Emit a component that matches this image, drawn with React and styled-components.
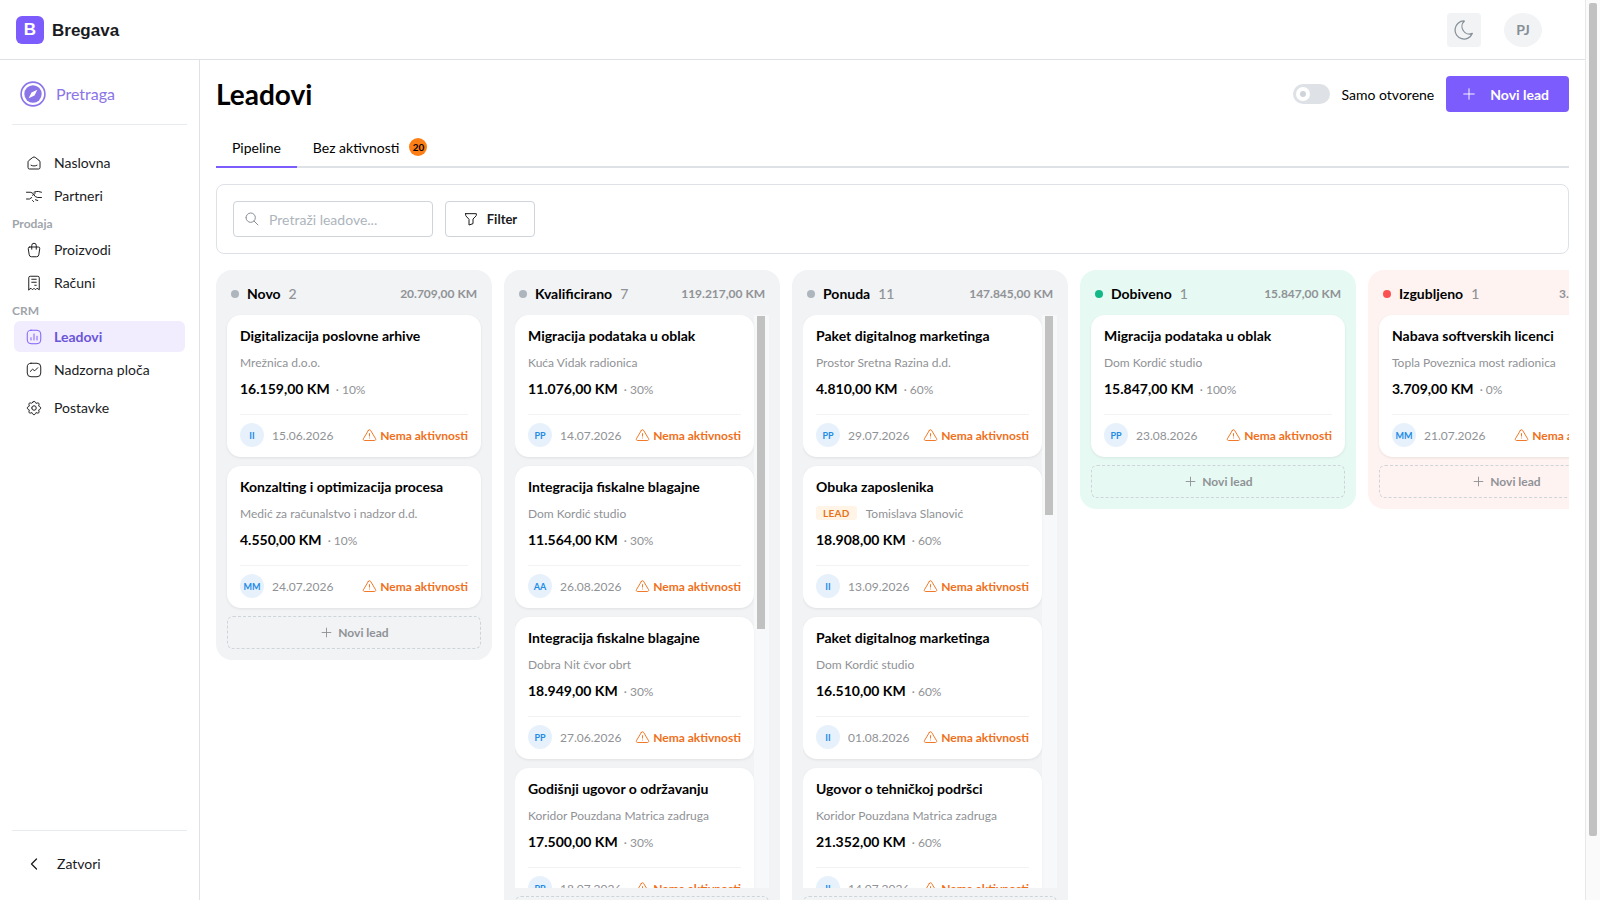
import styled, { createGlobalStyle } from 'styled-components'
import {
  TbSmartHome,
  TbShoppingBag,
  TbReceipt,
  TbSettings,
  TbChevronLeft,
  TbMoon,
  TbPlus,
  TbSearch,
  TbFilter,
  TbAlertTriangle,
} from 'react-icons/tb'

const GlobalStyle = createGlobalStyle`
  * { box-sizing: border-box; }
  html { overflow-y: scroll; scrollbar-width: none; }
  body {
    margin: 0;
    padding-right: 15px;
    background: #fff;
    color: #000;
    font-family: Lato, sans-serif;
    font-size: 14px;
  }
`

const PageTrack = styled.div`
  position: fixed;
  top: 0;
  right: 0;
  bottom: 0;
  z-index: 10;
  width: 15px;
  padding: 3px 3px 0 3px;
  background: #fafafa;
  border-left: 1px solid #e8e8e8;
`

const PageThumb = styled.div`
  height: 833px;
  background: #c1c1c1;
  border-radius: 2px;
`

const Header = styled.header`
  position: sticky;
  top: 0;
  z-index: 5;
  height: 60px;
  padding: 0 43px 0 16px;
  display: flex;
  align-items: center;
  justify-content: space-between;
  background: #fff;
  border-bottom: 1px solid #dee2e6;
`

const Brand = styled.div`
  display: flex;
  align-items: center;
  gap: 8px;
`

const BrandLogo = styled.div`
  width: 28px;
  height: 28px;
  border-radius: 6px;
  background: #7c5cfc;
  color: #fff;
  font: 700 17px 'Liberation Sans', sans-serif;
  display: flex;
  align-items: center;
  justify-content: center;
`

const BrandName = styled.span`
  margin-top: 2px;
  font: 700 17px 'Liberation Sans', sans-serif;
  color: #1a1b1e;
`

const HeaderActions = styled.div`
  display: flex;
  align-items: center;
  gap: 23px;
`

const ThemeButton = styled.div`
  width: 34px;
  height: 34px;
  border-radius: 4px;
  background: #f1f3f5;
  color: #868e96;
  display: flex;
  align-items: center;
  justify-content: center;
`

const UserBadge = styled.div`
  width: 38px;
  height: 34px;
  border-radius: 50%;
  background: #f1f3f5;
  color: #868e96;
  font-weight: 700;
  display: flex;
  align-items: center;
  justify-content: center;
`

const Shell = styled.div`
  display: flex;
  align-items: flex-start;
`

const Sidebar = styled.aside`
  position: sticky;
  top: 60px;
  flex: none;
  width: 200px;
  height: calc(100vh - 60px);
  display: flex;
  flex-direction: column;
  border-right: 1px solid #dee2e6;
`

const SearchRow = styled.div`
  height: 65px;
  margin: 0 12px;
  padding: 3px 0 0 8px;
  display: flex;
  align-items: center;
  gap: 10px;
  color: #8b74e8;
  font-size: 16px;
  border-bottom: 1px solid #e9ecef;
`

const Nav = styled.nav`
  flex: 1;
  padding: 22px 14px 0;
  display: flex;
  flex-direction: column;
  gap: 2px;
`

const NavItem = styled.div`
  height: 31px;
  padding-left: 11px;
  margin-top: ${(props) => (props.$spaced ? '5px' : '0')};
  display: flex;
  align-items: center;
  gap: 11px;
  border-radius: 6px;
  color: ${(props) => (props.$active ? '#6b55d8' : '#1a1b1e')};
  background: ${(props) => (props.$active ? '#f1ecfe' : 'transparent')};
  font-weight: ${(props) => (props.$active ? 700 : 400)};
`

const NavIcon = styled.span`
  width: 18px;
  display: flex;
  justify-content: center;
  color: ${(props) => (props.$active ? '#7c5cfc' : '#1a1b1e')};
`

const NavLabel = styled.div`
  height: 16px;
  margin: 3px 0 0 -2px;
  font-size: 12px;
  line-height: 16px;
  font-weight: 700;
  color: #a0a5ab;
`

const SidebarFooter = styled.div`
  height: 70px;
  margin: 0 12px;
  padding: 0 0 4px 12px;
  display: flex;
  align-items: center;
  gap: 13px;
  color: #1a1b1e;
  border-top: 1px solid #e9ecef;
`

const Main = styled.main`
  flex: 1;
  min-width: 0;
  padding: 16px 16px 31px;
`

const TitleRow = styled.div`
  height: 36px;
  display: flex;
  align-items: center;
  gap: 12px;
`

const Title = styled.h1`
  margin: 0 auto 0 0;
  font-size: 28px;
  font-weight: 700;
  line-height: 36px;
`

const Toggle = styled.div`
  width: 37px;
  height: 20px;
  padding: 3px;
  border-radius: 10px;
  background: #dee2e6;
`

const ToggleThumb = styled.div`
  width: 14px;
  height: 14px;
  border-radius: 50%;
  background: #fff;
  display: flex;
  align-items: center;
  justify-content: center;

  &::after {
    content: '';
    width: 6px;
    height: 6px;
    border-radius: 50%;
    background: #ced4da;
  }
`

const PrimaryButton = styled.button`
  height: 36px;
  padding: 0 20px 0 14px;
  display: flex;
  align-items: center;
  gap: 12px;
  border: 0;
  border-radius: 4px;
  background: #7c5cfc;
  color: #fff;
  font: 700 14px Lato, sans-serif;
`

const Tabs = styled.div`
  margin-top: 16px;
  display: flex;
  border-bottom: 2px solid #dee2e6;
`

const Tab = styled.div`
  height: 38px;
  padding: 0 16px;
  margin-bottom: -2px;
  box-sizing: content-box;
  display: flex;
  align-items: center;
  gap: 10px;
  border-bottom: 2px solid ${(props) => (props.$active ? '#7c5cfc' : 'transparent')};
`

const CountBadge = styled.span`
  width: 18px;
  height: 18px;
  border-radius: 50%;
  background: #fd7e14;
  color: #000;
  font-size: 10px;
  font-weight: 700;
  display: flex;
  align-items: center;
  justify-content: center;
`

const FilterCard = styled.div`
  margin-top: 16px;
  padding: 16px;
  display: flex;
  gap: 12px;
  border: 1px solid #dee2e6;
  border-radius: 8px;
`

const SearchInput = styled.div`
  width: 200px;
  height: 36px;
  padding-left: 10px;
  display: flex;
  align-items: center;
  gap: 9px;
  border: 1px solid #ced4da;
  border-radius: 4px;
  color: #adb5bd;
`

const SearchIcon = styled.span`
  display: flex;
  color: #868e96;
`

const FilterButton = styled.button`
  width: 90px;
  height: 36px;
  display: flex;
  align-items: center;
  justify-content: center;
  gap: 8px;
  border: 1px solid #ced4da;
  border-radius: 4px;
  background: #fff;
  color: #1a1b1e;
  font: 700 13px Lato, sans-serif;
`

const Board = styled.div`
  margin-top: 16px;
  display: flex;
  align-items: flex-start;
  gap: 12px;
  overflow-x: auto;
  scrollbar-width: none;
`

const COLUMN_BACKGROUNDS = { gray: '#f1f3f5', green: '#e6faf3', red: '#fff3f2' }
const COLUMN_DOTS = { gray: '#adb5bd', green: '#12b886', red: '#fa5252' }

const Column = styled.section`
  flex: none;
  width: 276px;
  padding: 0 11px 11px;
  border-radius: 16px;
  background: ${(props) => COLUMN_BACKGROUNDS[props.$tone]};
`

const ColumnHead = styled.div`
  height: 45px;
  padding: 2px 4px 0;
  display: flex;
  align-items: center;
`

const Dot = styled.span`
  width: 8px;
  height: 8px;
  margin-right: 8px;
  border-radius: 50%;
  background: ${(props) => COLUMN_DOTS[props.$tone]};
`

const ColumnName = styled.span`
  font-weight: 700;
`

const ColumnCount = styled.span`
  margin-left: 8px;
  color: #909296;
  font-weight: 500;
`

const ColumnTotal = styled.span`
  margin-left: auto;
  color: #909296;
  font-size: 12px;
  font-weight: 700;
  white-space: nowrap;
`

const CardListFrame = styled.div`
  position: relative;
`

const CardList = styled.div`
  display: flex;
  flex-direction: column;
  gap: 9px;
  max-height: calc(100vh - 327px);
  padding-right: ${(props) => (props.$scroll ? '15px' : '0')};
  overflow-y: ${(props) => (props.$scroll ? 'auto' : 'visible')};
  scrollbar-width: none;
`

const ListTrack = styled.div`
  position: absolute;
  top: 0;
  right: 0;
  bottom: 0;
  width: 15px;
  padding: 1px 4px 0 3px;
  background: rgba(255, 255, 255, 0.45);
`

const ListThumb = styled.div`
  background: #c1c1c1;
`

const Card = styled.article`
  flex: none;
  height: 142px;
  padding: 11px 13px 0;
  border-radius: 14px;
  background: #fff;
  box-shadow: 0 1px 3px rgba(0, 0, 0, 0.08);
`

const CardTitle = styled.div`
  font-size: 14px;
  line-height: 20px;
  font-weight: 700;
  white-space: nowrap;
  overflow: hidden;
`

const CardPartner = styled.div`
  height: 18px;
  margin-top: 7px;
  display: flex;
  align-items: center;
  gap: 9px;
  color: #909296;
  font-size: 12px;
  white-space: nowrap;
`

const LeadTag = styled.span`
  padding: 0 7px;
  height: 14px;
  line-height: 14px;
  border-radius: 3px;
  background: #fff4e6;
  color: #e8721a;
  font-size: 10px;
  font-weight: 700;
  letter-spacing: 0.3px;
`

const CardAmount = styled.div`
  margin-top: 8px;
  line-height: 20px;
  font-size: 14px;
  font-weight: 700;
  white-space: nowrap;
`

const Percent = styled.span`
  margin-left: 3px;
  color: #909296;
  font-size: 12px;
  font-weight: 400;
`

const CardFooter = styled.div`
  margin-top: 14px;
  padding-top: 8px;
  display: flex;
  align-items: center;
  border-top: 1px solid #f1f3f5;
  white-space: nowrap;
`

const Avatar = styled.span`
  flex: none;
  width: 24px;
  height: 24px;
  margin-right: 8px;
  border-radius: 50%;
  background: #e7f1fc;
  color: #228be6;
  font-size: 9px;
  font-weight: 700;
  display: flex;
  align-items: center;
  justify-content: center;
`

const CardDate = styled.span`
  color: #909296;
  font-size: 12px;
`

const NoActivity = styled.span`
  margin-left: auto;
  display: flex;
  align-items: center;
  gap: 3px;
  color: #f0701a;
  font-size: 12px;
  font-weight: 700;
`

const AddLead = styled.div`
  height: 33px;
  margin-top: 8px;
  display: flex;
  align-items: center;
  justify-content: center;
  gap: 4px;
  border: 1px dashed #ced4da;
  border-radius: 6px;
  color: #909296;
  font-size: 12px;
  font-weight: 700;
`

const CompassMark = () => (
  <svg width='26' height='26' viewBox='0 0 24 24'>
    <circle cx='12' cy='12' r='11' fill='none' stroke='#8b74e8' strokeWidth='1.5' />
    <circle cx='12' cy='12' r='8' fill='#8b74e8' />
    <path d='M16 8l-2.6 5.4L8 16l2.6-5.4z' fill='#fff' />
  </svg>
)

const HandshakeMark = () => (
  <svg width='20' height='20' viewBox='0 0 24 24' fill='none' stroke='currentColor' strokeWidth='1.3' strokeLinecap='round' strokeLinejoin='round'>
    <path d='M2 7h5l3 1 4 5 3 1h5' />
    <path d='M2 16h4l3-2' />
    <path d='M12 7l3-1h3l4 1' />
    <path d='M14 17l3 1' />
    <path d='M10 11c2-1 3-2 4-3' />
    <path d='M10 18l1.5 1.5' />
  </svg>
)

const BarsMark = () => (
  <svg width='20' height='20' viewBox='0 0 24 24' fill='none' stroke='currentColor' strokeWidth='1.3' strokeLinecap='round'>
    <rect x='3' y='3' width='18' height='18' rx='5' />
    <path d='M8 16v-3M12 16V8M16 16v-5' />
  </svg>
)

const TrendMark = () => (
  <svg width='20' height='20' viewBox='0 0 24 24' fill='none' stroke='currentColor' strokeWidth='1.3' strokeLinecap='round' strokeLinejoin='round'>
    <rect x='3' y='3' width='18' height='18' rx='5' />
    <path d='M7 14l3-3 3 2 4-4' />
  </svg>
)

const filler = (title, partner, amount, percent, who, date) => ({ title, partner, amount, percent, who, date })

const COLUMNS = [
  {
    name: 'Novo',
    tone: 'gray',
    total: '20.709,00 KM',
    cards: [
      filler('Digitalizacija poslovne arhive', 'Mrežnica d.o.o.', '16.159,00 KM', '10%', 'II', '15.06.2026'),
      filler('Konzalting i optimizacija procesa', 'Medić za računalstvo i nadzor d.d.', '4.550,00 KM', '10%', 'MM', '24.07.2026'),
    ],
  },
  {
    name: 'Kvalificirano',
    tone: 'gray',
    total: '119.217,00 KM',
    scroll: true,
    cards: [
      filler('Migracija podataka u oblak', 'Kuća Vidak radionica', '11.076,00 KM', '30%', 'PP', '14.07.2026'),
      filler('Integracija fiskalne blagajne', 'Dom Kordić studio', '11.564,00 KM', '30%', 'AA', '26.08.2026'),
      filler('Integracija fiskalne blagajne', 'Dobra Nit čvor obrt', '18.949,00 KM', '30%', 'PP', '27.06.2026'),
      filler('Godišnji ugovor o održavanju', 'Koridor Pouzdana Matrica zadruga', '17.500,00 KM', '30%', 'PP', '18.07.2026'),
      filler('Paket digitalnog marketinga', 'Mrežnica d.o.o.', '20.128,00 KM', '30%', 'II', '02.08.2026'),
      filler('Obuka zaposlenika', 'Prostor Sretna Razina d.d.', '19.000,00 KM', '30%', 'MM', '11.09.2026'),
      filler('Nabava softverskih licenci', 'Dom Kordić studio', '21.000,00 KM', '30%', 'AA', '05.07.2026'),
    ],
  },
  {
    name: 'Ponuda',
    tone: 'gray',
    total: '147.845,00 KM',
    scroll: true,
    cards: [
      filler('Paket digitalnog marketinga', 'Prostor Sretna Razina d.d.', '4.810,00 KM', '60%', 'PP', '29.07.2026'),
      filler('Obuka zaposlenika', 'Tomislava Slanović', '18.908,00 KM', '60%', 'II', '13.09.2026'),
      filler('Paket digitalnog marketinga', 'Dom Kordić studio', '16.510,00 KM', '60%', 'II', '01.08.2026'),
      filler('Ugovor o tehničkoj podršci', 'Koridor Pouzdana Matrica zadruga', '21.352,00 KM', '60%', 'II', '14.07.2026'),
      filler('Migracija podataka u oblak', 'Mrežnica d.o.o.', '12.000,00 KM', '60%', 'PP', '20.07.2026'),
      filler('Konzalting i optimizacija procesa', 'Dobra Nit čvor obrt', '14.265,00 KM', '60%', 'MM', '03.08.2026'),
      filler('Integracija fiskalne blagajne', 'Kuća Vidak radionica', '11.000,00 KM', '60%', 'AA', '09.08.2026'),
      filler('Godišnji ugovor o održavanju', 'Dom Kordić studio', '13.000,00 KM', '60%', 'PP', '17.08.2026'),
      filler('Nabava softverskih licenci', 'Topla Poveznica most radionica', '10.000,00 KM', '60%', 'II', '22.08.2026'),
      filler('Digitalizacija poslovne arhive', 'Prostor Sretna Razina d.d.', '12.500,00 KM', '60%', 'MM', '28.08.2026'),
      filler('Paket digitalnog marketinga', 'Mrežnica d.o.o.', '13.500,00 KM', '60%', 'AA', '04.09.2026'),
    ],
  },
  {
    name: 'Dobiveno',
    tone: 'green',
    total: '15.847,00 KM',
    cards: [filler('Migracija podataka u oblak', 'Dom Kordić studio', '15.847,00 KM', '100%', 'PP', '23.08.2026')],
  },
  {
    name: 'Izgubljeno',
    tone: 'red',
    total: '3.709,00 KM',
    cards: [filler('Nabava softverskih licenci', 'Topla Poveznica most radionica', '3.709,00 KM', '0%', 'MM', '21.07.2026')],
  },
]

const LeadCard = ({ card }) => (
  <Card>
    <CardTitle>{card.title}</CardTitle>
    <CardPartner>
      {card.partner === 'Tomislava Slanović' && <LeadTag>LEAD</LeadTag>}
      {card.partner}
    </CardPartner>
    <CardAmount>
      {card.amount}
      <Percent> · {card.percent}</Percent>
    </CardAmount>
    <CardFooter>
      <Avatar>{card.who}</Avatar>
      <CardDate>{card.date}</CardDate>
      <NoActivity>
        <TbAlertTriangle size={15} strokeWidth={1.5} />
        Nema aktivnosti
      </NoActivity>
    </CardFooter>
  </Card>
)

const PipelineColumn = ({ column }) => {
  const listHeight = 573
  const contentHeight = column.cards.length * 151 - 9
  return (
    <Column $tone={column.tone}>
      <ColumnHead>
        <Dot $tone={column.tone} />
        <ColumnName>{column.name}</ColumnName>
        <ColumnCount>{column.cards.length}</ColumnCount>
        <ColumnTotal>{column.total}</ColumnTotal>
      </ColumnHead>
      <CardListFrame>
        <CardList $scroll={column.scroll}>
          {column.cards.map((card, index) => (
            <LeadCard key={index} card={card} />
          ))}
        </CardList>
        {column.scroll && (
          <ListTrack>
            <ListThumb style={{ height: (listHeight * listHeight) / contentHeight }} />
          </ListTrack>
        )}
      </CardListFrame>
      <AddLead>
        <TbPlus size={15} strokeWidth={1.5} />
        Novi lead
      </AddLead>
    </Column>
  )
}

export default function App() {
  const stroke = 1.3
  return (
    <>
      <GlobalStyle />
      <Header>
        <Brand>
          <BrandLogo>B</BrandLogo>
          <BrandName>Bregava</BrandName>
        </Brand>
        <HeaderActions>
          <ThemeButton>
            <TbMoon size={24} strokeWidth={1.25} />
          </ThemeButton>
          <UserBadge>PJ</UserBadge>
        </HeaderActions>
      </Header>
      <Shell>
        <Sidebar>
          <SearchRow>
            <CompassMark />
            Pretraga
          </SearchRow>
          <Nav>
            <NavItem>
              <NavIcon><TbSmartHome size={20} strokeWidth={stroke} /></NavIcon>
              Naslovna
            </NavItem>
            <NavItem>
              <NavIcon><HandshakeMark /></NavIcon>
              Partneri
            </NavItem>
            <NavLabel>Prodaja</NavLabel>
            <NavItem>
              <NavIcon><TbShoppingBag size={20} strokeWidth={stroke} /></NavIcon>
              Proizvodi
            </NavItem>
            <NavItem>
              <NavIcon><TbReceipt size={20} strokeWidth={stroke} /></NavIcon>
              Računi
            </NavItem>
            <NavLabel>CRM</NavLabel>
            <NavItem $active>
              <NavIcon $active><BarsMark /></NavIcon>
              Leadovi
            </NavItem>
            <NavItem>
              <NavIcon><TrendMark /></NavIcon>
              Nadzorna ploča
            </NavItem>
            <NavItem $spaced>
              <NavIcon><TbSettings size={20} strokeWidth={stroke} /></NavIcon>
              Postavke
            </NavItem>
          </Nav>
          <SidebarFooter>
            <TbChevronLeft size={20} strokeWidth={1.5} />
            Zatvori
          </SidebarFooter>
        </Sidebar>
        <Main>
          <TitleRow>
            <Title>Leadovi</Title>
            <Toggle>
              <ToggleThumb />
            </Toggle>
            Samo otvorene
            <PrimaryButton>
              <TbPlus size={18} strokeWidth={1.25} />
              Novi lead
            </PrimaryButton>
          </TitleRow>
          <Tabs>
            <Tab $active>Pipeline</Tab>
            <Tab>
              Bez aktivnosti
              <CountBadge>20</CountBadge>
            </Tab>
          </Tabs>
          <FilterCard>
            <SearchInput>
              <SearchIcon><TbSearch size={16} strokeWidth={1.5} /></SearchIcon>
              Pretraži leadove...
            </SearchInput>
            <FilterButton>
              <TbFilter size={16} strokeWidth={1.5} />
              Filter
            </FilterButton>
          </FilterCard>
          <Board>
            {COLUMNS.map((column) => (
              <PipelineColumn key={column.name} column={column} />
            ))}
          </Board>
        </Main>
      </Shell>
      <PageTrack>
        <PageThumb />
      </PageTrack>
    </>
  )
}
